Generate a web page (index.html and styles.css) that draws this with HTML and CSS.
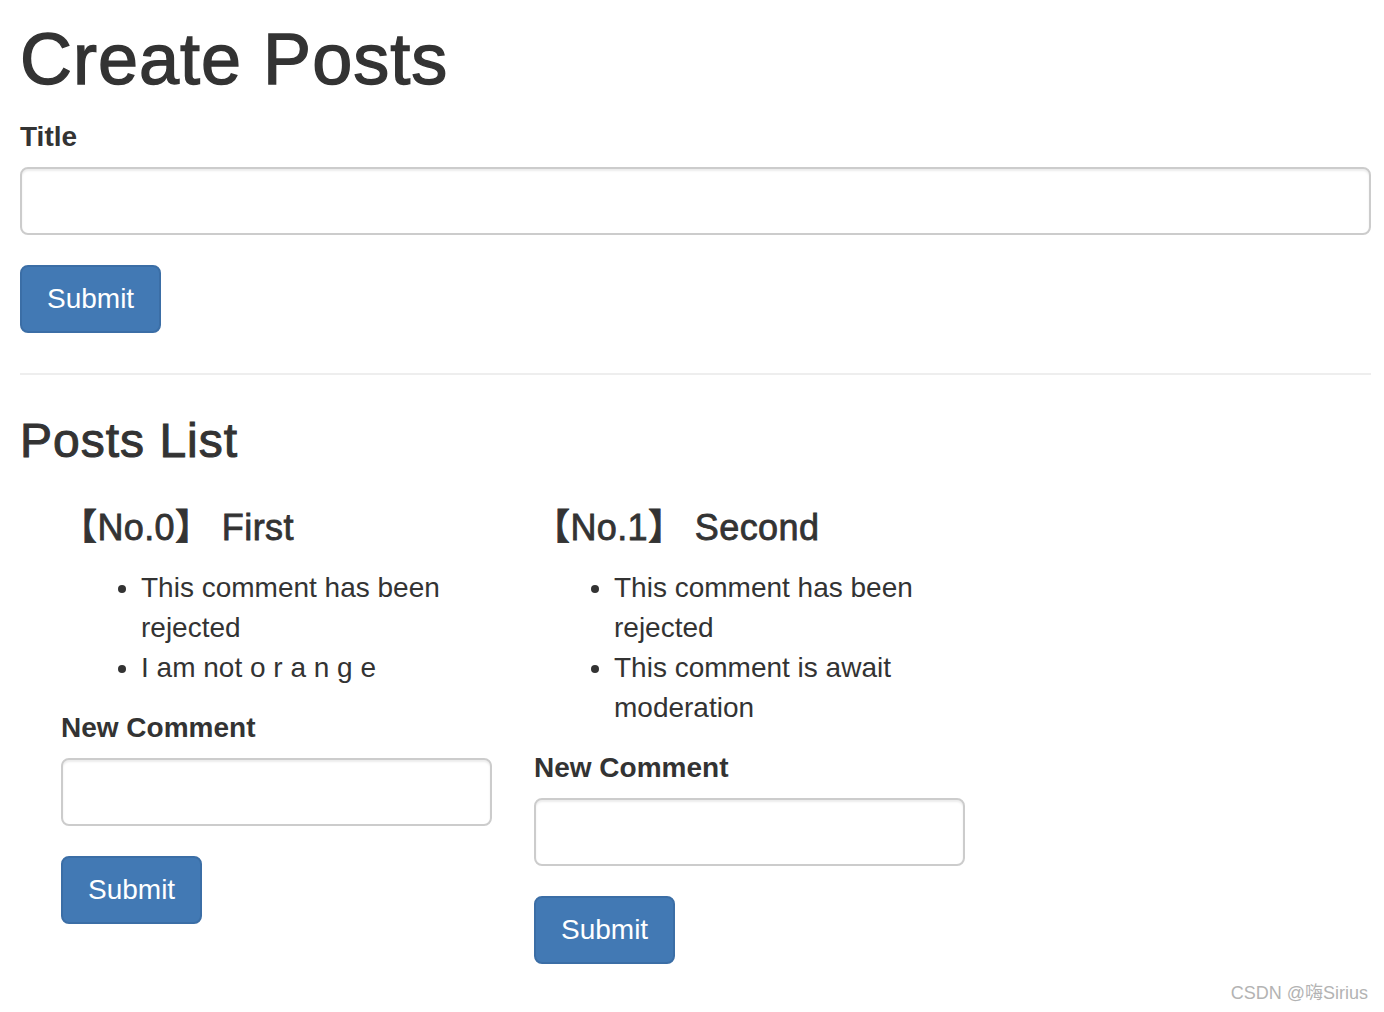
FILE: index.html
```html
<!DOCTYPE html>
<html>
<head>
<meta charset="utf-8">
<title>Create Posts</title>
<link rel="stylesheet" href="styles.css">
</head>
<body>
<div class="page">
  <h1 class="page-title">Create Posts</h1>
  <form class="post-form">
    <div class="form-group">
      <label class="form-label">Title</label>
      <input class="form-control" type="text">
    </div>
    <button class="btn" type="button">Submit</button>
  </form>
  <hr class="divider">
  <h3 class="section-title">Posts List</h3>
  <div class="posts">
    <div class="post">
      <h4 class="post-title">【No.0】 First</h4>
      <ul class="comments">
        <li>This comment has been rejected</li>
        <li>I am not o r a n g e</li>
      </ul>
      <div class="form-group">
        <label class="form-label">New Comment</label>
        <input class="form-control" type="text">
      </div>
      <button class="btn" type="button">Submit</button>
    </div>
    <div class="post">
      <h4 class="post-title">【No.1】 Second</h4>
      <ul class="comments">
        <li>This comment has been rejected</li>
        <li>This comment is await moderation</li>
      </ul>
      <div class="form-group">
        <label class="form-label">New Comment</label>
        <input class="form-control" type="text">
      </div>
      <button class="btn" type="button">Submit</button>
    </div>
  </div>
</div>
<div class="watermark">CSDN @嗨Sirius</div>
</body>
</html>
```
FILE: styles.css
```css
html, body {
  margin: 0;
  padding: 0;
  background: #fff;
}
body {
  font-family: "Liberation Sans", "Noto Sans CJK SC", sans-serif;
  font-size: 28px;
  line-height: 40px;
  color: #333;
  width: 1384px;
  height: 1012px;
  overflow: hidden;
  position: relative;
}
.page {
  padding: 20px 13px 0 20px;
}
.page-title {
  font-size: 72px;
  line-height: 1.1;
  font-weight: 500;
  letter-spacing: 1px;
  -webkit-text-stroke: 1.4px #333;
  margin: 0 0 18px 0;
}
.form-group {
  margin-bottom: 30px;
}
.form-label {
  display: block;
  font-weight: bold;
  margin-bottom: 10px;
}
.form-control {
  display: block;
  box-sizing: border-box;
  width: 100%;
  height: 68px;
  margin: 0;
  padding: 12px 24px;
  font-size: 28px;
  border: 2px solid #ccc;
  border-radius: 8px;
  box-shadow: inset 0 2px 2px rgba(0,0,0,.075);
  background: #fff;
}
.btn {
  display: block;
  box-sizing: border-box;
  height: 68px;
  padding: 0 25px;
  font-family: "Liberation Sans", sans-serif;
  font-size: 28px;
  color: #fff;
  background: #4279b4;
  border: 2px solid #3b6ea6;
  border-radius: 8px;
}
.divider {
  margin: 40px 0;
  border: 0;
  border-top: 2px solid #eee;
  height: 0;
}
.section-title {
  font-size: 48px;
  line-height: 1.1;
  font-weight: 500;
  letter-spacing: 1px;
  -webkit-text-stroke: 1px #333;
  margin: 0 0 20px 0;
}
.posts {
  display: flex;
  align-items: flex-start;
  gap: 42px;
  padding-left: 41px;
}
.post {
  width: 431px;
}
.post-title {
  font-size: 36px;
  line-height: 1.1;
  font-weight: 500;
  letter-spacing: 0.4px;
  -webkit-text-stroke: 0.8px #333;
  margin: 20px 0;
}
.comments {
  margin: 0 0 20px 0;
  padding-left: 80px;
  width: 320px;
}
.watermark {
  position: absolute;
  right: 16px;
  bottom: 7px;
  font-size: 18px;
  line-height: 24px;
  color: #b3b3b3;
}
```
